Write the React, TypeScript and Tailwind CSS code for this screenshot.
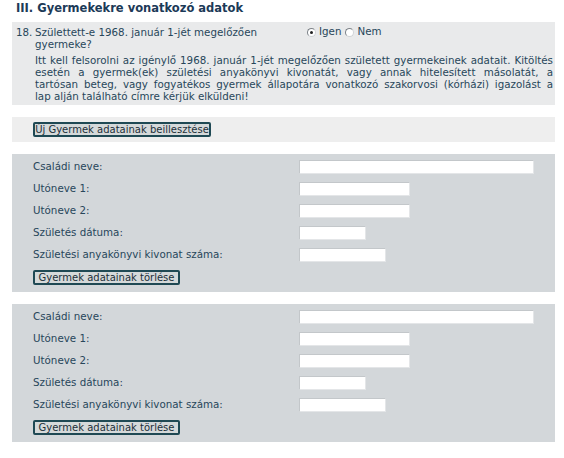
import { ReactNode } from "react";

const Radio = ({ checked, label }: { checked?: boolean; label: string }) => {
  return (
    <label className="flex items-center gap-[3px]">
      <span className="flex h-[9px] w-[9px] items-center justify-center rounded-full border border-t-[#7d8288] border-l-[#7d8288] border-r-[#d0d3d6] border-b-[#d0d3d6] bg-white">
        {checked && <span className="h-[3px] w-[3px] rounded-full bg-[#222]" />}
      </span>
      <span>{label}</span>
    </label>
  );
};

const Button = ({ children, width }: { children: ReactNode; width: string }) => {
  return (
    <button
      className={`${width} h-[15px] whitespace-nowrap rounded-[2px] border-2 border-[#1f4954] bg-[#d5d9da] text-center text-[10px] leading-[11px] text-[#1c2f38]`}
    >
      {children}
    </button>
  );
};

const fields = [
  { label: "Családi neve:", width: "w-[235px]" },
  { label: "Utóneve 1:", width: "w-[111px]" },
  { label: "Utóneve 2:", width: "w-[111px]" },
  { label: "Születés dátuma:", width: "w-[67px]" },
  { label: "Születési anyakönyvi kivonat száma:", width: "w-[87px]" },
];

// sorok úgy, ahogy az eredeti oldal tördeli
const info = [
  "Itt kell felsorolni az igénylő 1968. január 1-jét megelőzően született gyermekeinek adatait. Kitöltés",
  "esetén a gyermek(ek) születési anyakönyvi kivonatát, vagy annak hitelesített másolatát, a",
  "tartósan beteg, vagy fogyatékos gyermek állapotára vonatkozó szakorvosi (kórházi) igazolást a",
  "lap alján található címre kérjük elküldeni!",
];

const ChildBlock = () => {
  return (
    <div className="mt-[12px] h-[138px] bg-[#d3d7da] pl-[21px] pt-[6px]">
      {fields.map((f) => (
        <div key={f.label} className="flex h-[22px] items-start">
          <span className="w-[266px] leading-[12px]">{f.label}</span>
          <span
            className={`${f.width} h-[14px] border border-t-[#c3c7ca] border-l-[#c3c7ca] border-r-[#e4e6e8] border-b-[#e4e6e8] bg-white`}
          />
        </div>
      ))}
      <Button width="w-[147px]">Gyermek adatainak törlése</Button>
    </div>
  );
};

export default function App() {
  return (
    <div className="h-[458px] w-[564px] bg-white pl-3 pr-[9px] font-['DejaVu_Sans',Verdana,sans-serif] text-[10.3px] text-[#27465a]">
      <h2 className="h-[22px] pl-1 pt-[1px] text-[11.5px] font-bold leading-[14px] text-[#1c3a57]">
        III. Gyermekekre vonatkozó adatok
      </h2>
      <div className="h-[83px] bg-[#e9eaeb] pl-1 pr-[2px] pt-[4px]">
        <div className="flex">
          <span className="w-[19px] leading-[12px]">18.</span>
          <span className="w-[256px] leading-[12px]">
            Születtett-e 1968. január 1-jét megelőzően gyermeke?
          </span>
          <div className="ml-[16px] flex h-[12px] items-center gap-[4px]">
            <Radio checked label="Igen" />
            <Radio label="Nem" />
          </div>
        </div>
        <div className="mt-[4px] pl-[19px] leading-[12px]">
          {info.map((line, i) => (
            <div
              key={i}
              className={
                i < info.length - 1
                  ? "whitespace-nowrap text-justify [text-align-last:justify]"
                  : "whitespace-nowrap"
              }
            >
              {line}
            </div>
          ))}
        </div>
      </div>
      <div className="mt-[12px] h-[25px] bg-[#eeeeee] pl-[21px] pt-[5px]">
        <Button width="w-[178px]">Új Gyermek adatainak beillesztése</Button>
      </div>
      <ChildBlock />
      <ChildBlock />
    </div>
  );
}
